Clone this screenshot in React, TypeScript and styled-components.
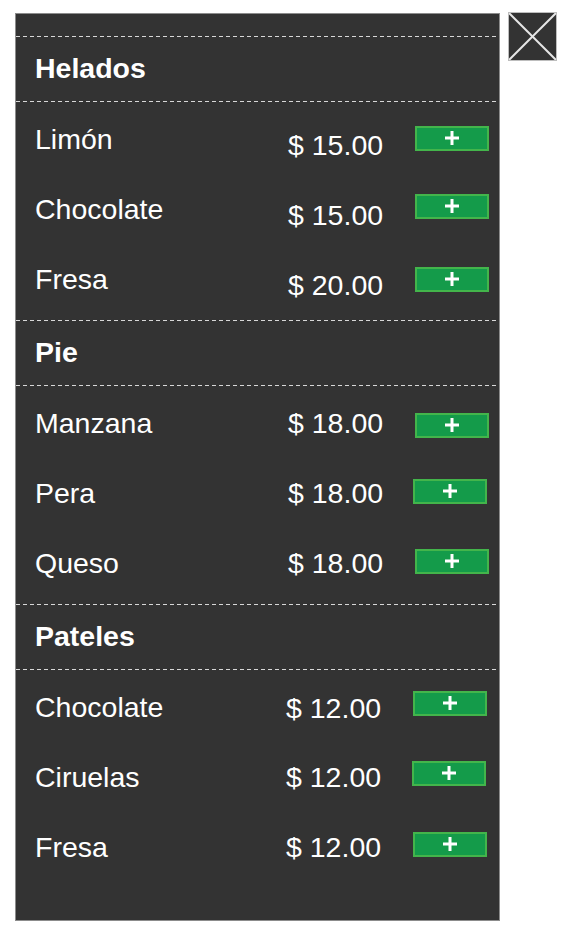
import React from "react";
import styled, { createGlobalStyle } from "styled-components";

const Global = createGlobalStyle`
  html, body { margin: 0; padding: 0; background: #ffffff; }
  body { font-family: "Liberation Sans", Arial, Helvetica, sans-serif; }
`;

const Page = styled.div`
  display: flex;
  align-items: flex-start;
  gap: 8px;
  padding: 12px 0 0 15px;
`;

const Panel = styled.div`
  box-sizing: border-box;
  width: 485px;
  height: 908px;
  margin-top: 1px;
  background: #333333;
  border: 1px solid #8c8c8c;
  padding-top: 22px;
  display: flex;
  flex-direction: column;
`;

const Divider = styled.div`
  height: 1px;
  background-image: repeating-linear-gradient(
    to right,
    #d8d8d8 0,
    #d8d8d8 4px,
    transparent 4px,
    transparent 7px
  );
`;

const Header = styled.div`
  box-sizing: border-box;
  height: 64px;
  padding: 0 0 2px 19px;
  display: flex;
  align-items: center;
  color: #ffffff;
  font-weight: bold;
  font-size: 28.5px;
`;

const Group = styled.div`
  padding: 3px 0 5px;
  display: flex;
  flex-direction: column;
`;

const Row = styled.div`
  box-sizing: border-box;
  height: 70px;
  padding: 0 0 2px 19px;
  display: grid;
  grid-template-columns: 253px 126px 74px;
  align-items: center;
  color: #ffffff;
  font-size: 28.5px;
`;

const Name = styled.span`
  line-height: 1;
`;

const Price = styled.span<{ $dy: number; $dx: number }>`
  line-height: 1;
  transform: translate(${(p) => p.$dx}px, ${(p) => p.$dy}px);
`;

const AddButton = styled.button<{ $dy: number; $dx: number }>`
  box-sizing: border-box;
  width: 74px;
  height: 25px;
  padding: 0;
  display: flex;
  align-items: center;
  justify-content: center;
  background: #149b4a;
  border: 2px solid #43b54b;
  cursor: pointer;
  transform: translate(${(p) => p.$dx}px, ${(p) => p.$dy}px);
`;

const CloseBox = styled.button`
  box-sizing: border-box;
  width: 49px;
  height: 49px;
  padding: 0;
  background: #333333;
  border: 1px solid #bdbdbd;
  display: block;
  cursor: pointer;
`;

const PlusIcon = () => (
  <svg width="14" height="14" viewBox="0 0 14 14">
    <rect x="5.5" y="0" width="3" height="14" fill="#ffffff" />
    <rect x="0" y="5.5" width="14" height="3" fill="#ffffff" />
  </svg>
);

const CrossIcon = () => (
  <svg width="47" height="47" viewBox="0 0 47 47" style={{ display: "block" }}>
    <line x1="0" y1="0" x2="47" y2="47" stroke="#e6e6e6" strokeWidth="2" />
    <line x1="47" y1="0" x2="0" y2="47" stroke="#e6e6e6" strokeWidth="2" />
  </svg>
);

type Item = { name: string; price: string; pdy: number; pdx: number; bdy: number; bdx: number };
type Section = { title: string; items: Item[] };

const sections: Section[] = [
  {
    title: "Helados",
    items: [
      { name: "Limón", price: "$ 15.00", pdy: 6, pdx: 0, bdy: -1, bdx: 1 },
      { name: "Chocolate", price: "$ 15.00", pdy: 6, pdx: 0, bdy: -3, bdx: 1 },
      { name: "Fresa", price: "$ 20.00", pdy: 6, pdx: 0, bdy: 0, bdx: 1 },
    ],
  },
  {
    title: "Pie",
    items: [
      { name: "Manzana", price: "$ 18.00", pdy: 0, pdx: 0, bdy: 2, bdx: 1 },
      { name: "Pera", price: "$ 18.00", pdy: 0, pdx: 0, bdy: -2, bdx: -1 },
      { name: "Queso", price: "$ 18.00", pdy: 0, pdx: 0, bdy: -2, bdx: 1 },
    ],
  },
  {
    title: "Pateles",
    items: [
      { name: "Chocolate", price: "$ 12.00", pdy: 1, pdx: -2, bdy: -4, bdx: -1 },
      { name: "Ciruelas", price: "$ 12.00", pdy: 0, pdx: -2, bdy: -4, bdx: -2 },
      { name: "Fresa", price: "$ 12.00", pdy: 0, pdx: -2, bdy: -3, bdx: -1 },
    ],
  },
];

export default function App() {
  return (
    <>
      <Global />
      <Page>
        <Panel>
          {sections.map((s) => (
            <React.Fragment key={s.title}>
              <Divider />
              <Header>{s.title}</Header>
              <Divider />
              <Group>
                {s.items.map((it, i) => (
                  <Row key={i}>
                    <Name>{it.name}</Name>
                    <Price $dy={it.pdy} $dx={it.pdx}>
                      {it.price}
                    </Price>
                    <AddButton $dy={it.bdy} $dx={it.bdx} aria-label="Agregar">
                      <PlusIcon />
                    </AddButton>
                  </Row>
                ))}
              </Group>
            </React.Fragment>
          ))}
        </Panel>
        <CloseBox aria-label="Cerrar">
          <CrossIcon />
        </CloseBox>
      </Page>
    </>
  );
}
